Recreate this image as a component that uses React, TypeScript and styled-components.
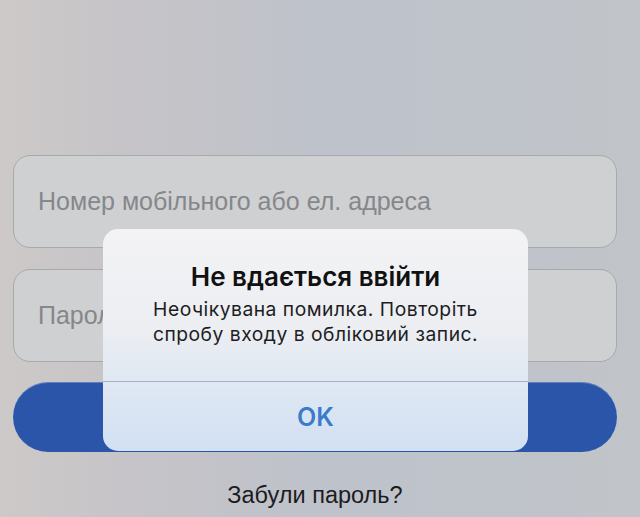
import styled, { createGlobalStyle } from "styled-components";

const GlobalStyle = createGlobalStyle`
  html, body {
    margin: 0;
    padding: 0;
    width: 640px;
    height: 517px;
    overflow: hidden;
  }
  body {
    font-family: "Liberation Sans", Arial, sans-serif;
  }
`;

const Screen = styled.div`
  position: relative;
  width: 640px;
  height: 517px;
  overflow: hidden;
  background: linear-gradient(
    90deg,
    #cdc9c8 0%,
    #c6c4c8 20%,
    #bec2ca 50%,
    #bfc3ca 80%,
    #c1c4c8 100%
  );
`;

const Form = styled.div`
  display: flex;
  flex-direction: column;
  gap: 21px;
  width: 604px;
  padding: 155px 0 0 13px;
`;

const Field = styled.div`
  display: flex;
  align-items: center;
  box-sizing: border-box;
  height: 93px;
  padding: 0 24px;
  border: 1.5px solid #a8a9ad;
  border-radius: 17px;
  background: #cfd0d2;
  color: #85878b;
  font-size: 25px;
`;

const LoginButton = styled.div`
  height: 70px;
  margin-top: -1px;
  border-radius: 35px;
  background: #2a55a8;
  box-shadow: inset 0 1px 0 rgba(255, 255, 255, 0.25);
`;

const Forgot = styled.div`
  margin-top: 9px;
  text-align: center;
  color: #1c1c1e;
  font-size: 23.5px;
`;

const Alert = styled.div`
  position: absolute;
  left: 103px;
  top: 229px;
  width: 425px;
  height: 222px;
  display: flex;
  flex-direction: column;
  border-radius: 15px;
  overflow: hidden;
  background: linear-gradient(180deg, #f3f3f5 0%, #eceef2 45%, #dfe8f3 70%, #d2e0f3 100%);
  font-family: Inter, "Liberation Sans", sans-serif;
  text-align: center;
`;

const AlertBody = styled.div`
  display: flex;
  flex-direction: column;
  align-items: center;
  gap: 4px;
  padding: 31px 16px 0;
  height: 153px;
  box-sizing: border-box;
  border-bottom: 1px solid #a7b3c3;
`;

const Title = styled.div`
  font-size: 26px;
  line-height: 33px;
  font-weight: 600;
  color: #111;
`;

const Message = styled.div`
  font-size: 19.3px;
  line-height: 25px;
  letter-spacing: 0.5px;
  color: #1d1d1f;
`;

const AlertAction = styled.div`
  flex: 1;
  display: flex;
  align-items: center;
  justify-content: center;
  color: #3a7bcb;
  font-size: 25px;
  font-weight: 600;
`;

export default function App() {
  return (
    <>
      <GlobalStyle />
      <Screen>
        <Form>
          <Field>Номер мобільного або ел. адреса</Field>
          <Field>Пароль</Field>
          <LoginButton />
          <Forgot>Забули пароль?</Forgot>
        </Form>
        <Alert>
          <AlertBody>
            <Title>Не вдається ввійти</Title>
            <Message>
              Неочікувана помилка. Повторіть
              <br />
              спробу входу в обліковий запис.
            </Message>
          </AlertBody>
          <AlertAction>OK</AlertAction>
        </Alert>
      </Screen>
    </>
  );
}
